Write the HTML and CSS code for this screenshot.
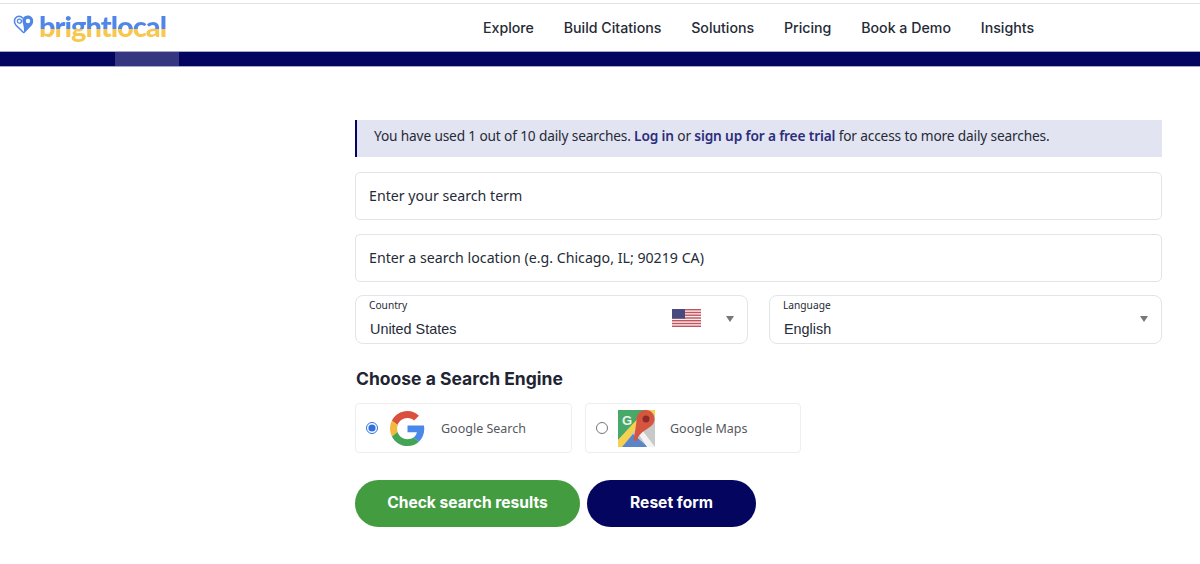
FILE: index.html
```html
<!DOCTYPE html>
<html lang="en">
<head>
<meta charset="utf-8">
<title>BrightLocal search</title>
<link rel="stylesheet" href="styles.css">
</head>
<body>
<header class="site-header">
  <a class="logo" href="#">
    <svg class="logo-mark" width="22" height="22" viewBox="0 0 22 22" fill="none">
      <path d="M11 20 L3 12.2 C0.6 9.6 1 5.5 3.8 3.9 C6.2 2.6 8.4 3.6 10 5.2" stroke="#4f86e8" stroke-width="1.6" stroke-linejoin="round"/>
      <path d="M11 20.5 L18.6 12.6 C21.6 9.2 20.4 3.4 15.6 2.6 C11.6 2 8.6 5.4 9.6 9.2 C10.1 11 11.4 15 11 20.5Z" fill="#4f86e8"/>
      <circle cx="15" cy="8" r="2.2" fill="#fff"/>
      <circle cx="6.4" cy="8.2" r="2" stroke="#4f86e8" stroke-width="1.3"/>
    </svg>
    <span class="logo-text">brightlocal</span>
  </a>
  <nav class="nav">
    <a href="#">Explore</a>
    <a href="#">Build Citations</a>
    <a href="#">Solutions</a>
    <a href="#">Pricing</a>
    <a href="#">Book a Demo</a>
    <a href="#">Insights</a>
  </nav>
</header>
<div class="band"><span class="band-tab"></span></div>
<main class="main">
  <p class="notice">You have used 1 out of 10 daily searches. <a href="#">Log in</a> or <a href="#">sign up for a free trial</a> for access to more daily searches.</p>
  <div class="field field-term">Enter your search term</div>
  <div class="field">Enter a search location (e.g. Chicago, IL; 90219 CA)</div>
  <div class="select-row">
    <div class="select">
      <span class="select-label">Country</span>
      <span class="select-value">United States</span>
      <svg class="flag" width="29" height="18" viewBox="0 0 29 18">
        <rect width="29" height="18" fill="#f4eeee"/>
        <g fill="#c5535c">
          <rect y="0" width="29" height="1.4"/>
          <rect y="2.8" width="29" height="1.4"/>
          <rect y="5.5" width="29" height="1.4"/>
          <rect y="8.3" width="29" height="1.4"/>
          <rect y="11" width="29" height="1.4"/>
          <rect y="13.8" width="29" height="1.4"/>
          <rect y="16.6" width="29" height="1.4"/>
        </g>
        <rect width="13" height="9.6" fill="#47497f"/>
      </svg>
      <span class="caret"></span>
    </div>
    <div class="select">
      <span class="select-label">Language</span>
      <span class="select-value">English</span>
      <span class="caret"></span>
    </div>
  </div>
  <h2 class="heading">Choose a Search Engine</h2>
  <div class="engines">
    <label class="engine engine-search">
      <input class="radio" type="radio" name="engine" checked>
      <svg class="engine-icon" width="35" height="35" viewBox="0 0 48 48">
        <path fill="#d9503f" d="M24 9.5c3.9 0 6.9 1.6 9 3.6l6.7-6.7C35.6 2.6 30.2 0 24 0 14.6 0 6.5 5.4 2.6 13.2l7.8 6.1C12.3 13.5 17.6 9.5 24 9.5z"/>
        <path fill="#4a88ea" d="M47 24.6c0-1.6-.2-3.2-.5-4.6H24v9.1h12.9c-.6 3-2.2 5.5-4.8 7.2l7.5 5.8C44 38 47 31.9 47 24.6z"/>
        <path fill="#f3b93f" d="M10.5 28.7c-.5-1.4-.7-3-.7-4.7s.3-3.2.7-4.7l-7.9-6.1C.9 16.5 0 20.1 0 24s.9 7.5 2.6 10.8l7.9-6.1z"/>
        <path fill="#43a356" d="M24 48c6.5 0 11.9-2.1 15.6-5.8l-7.5-5.8c-2.1 1.4-4.7 2.2-8.1 2.2-6.4 0-11.7-4-13.6-9.9l-7.8 6.1C6.5 42.6 14.6 48 24 48z"/>
      </svg>
      <span class="engine-name">Google Search</span>
    </label>
    <label class="engine engine-maps">
      <input class="radio" type="radio" name="engine">
      <svg class="engine-icon" width="37" height="37" viewBox="0 0 37 37">
        <rect width="37" height="37" rx="1" fill="#c9c9c9"/>
        <path d="M0 0H28L0 30Z" fill="#48a868"/>
        <path d="M31 0H37V6Z" fill="#f4d24f"/>
        <path d="M0 37V30L28 0H31L5 37Z" fill="#f4d24f"/>
        <path d="M4 37L15 24L30 37Z" fill="#5a85c9"/>
        <path d="M20 23L24 20L37 37H29Z" fill="#f3f3f3"/>
        <path d="M28 0C23 0 18.5 4 18.5 9.5C18.5 13 17 22 15.5 31L18.5 31C20.5 25 24 22 29 19C33 16.5 36.5 14 36.5 9C36.5 4 33 0 28 0Z" fill="#d6553f"/>
        <circle cx="28" cy="9" r="3.5" fill="#8e2a2a"/>
        <text class="maps-g" x="4" y="14.5">G</text>
      </svg>
      <span class="engine-name">Google Maps</span>
    </label>
  </div>
  <div class="actions">
    <button class="btn btn-green" type="button">Check search results</button>
    <button class="btn btn-navy" type="button">Reset form</button>
  </div>
</main>
</body>
</html>
```
FILE: styles.css
```css
* { box-sizing: border-box; }
html, body { margin: 0; padding: 0; }
body {
  width: 1200px;
  height: 564px;
  overflow: hidden;
  background: #fff;
  font-family: "Noto Sans", "Open Sans", sans-serif;
  color: #252b37;
}
a { text-decoration: none; color: inherit; }

.site-header {
  height: 51px;
  margin-top: 3px;
  margin-bottom: -3px;
  border-top: 1px solid #e3e3e3;
  display: flex;
  align-items: center;
  padding-left: 13px;
}
.logo {
  display: flex;
  align-items: center;
  gap: 4px;
  width: 470px;
  margin-top: -6px;
  flex: none;
}
.logo-mark { flex: none; margin-top: -4px; }
.logo-text {
  font-family: "Lato", sans-serif;
  font-weight: 900;
  font-size: 29px;
  line-height: 32px;
  letter-spacing: -1px;
  background: linear-gradient(to bottom, #4f86e8 0, #4f86e8 59%, #f9c74f 59%, #f9c74f 100%);
  -webkit-background-clip: text;
  background-clip: text;
  color: transparent;
}
.nav {
  display: flex;
  gap: 29.8px;
  font-family: "Inter", sans-serif;
  font-weight: 500;
  font-size: 14.2px;
  color: #252b37;
  margin-top: -4px;
}
.band {
  height: 16px;
  background: #03055e;
  border-top: 1px solid #a6a8c8;
  border-bottom: 1px solid #a6a8c8;
  padding-left: 115px;
}
.band-tab {
  display: block;
  width: 64px;
  height: 100%;
  background: #35367f;
}
.main {
  width: 807px;
  margin-left: 355px;
  padding-top: 53px;
}
.notice {
  margin: 0 0 15px;
  height: 37px;
  background: #e3e4f1;
  border-left: 2px solid #03055e;
  padding-left: 17px;
  font-size: 13.7px;
  letter-spacing: -0.15px;
  line-height: 32px;
}
.notice a { color: #2b2d7c; font-weight: 600; }
.field {
  height: 48px;
  border: 1px solid #e3e4e8;
  border-radius: 5px;
  padding-left: 13px;
  margin-bottom: 13px;
  font-size: 14.2px;
  line-height: 46px;
}
.field-term { margin-bottom: 14px; }
.select-row {
  display: flex;
  gap: 21px;
}
.select {
  flex: 1;
  height: 49px;
  border: 1px solid #e3e4e8;
  border-radius: 8px;
  position: relative;
  padding-left: 13px;
  display: flex;
  flex-direction: column;
}
.select-label {
  font-size: 10.2px;
  line-height: 14px;
  margin-top: 2px;
}
.select-value {
  font-family: "Liberation Sans", sans-serif;
  font-size: 14.4px;
  line-height: 17px;
  margin-top: 9px;
  margin-left: 1px;
}
.flag {
  position: absolute;
  left: 316px;
  top: 13px;
}
.caret {
  position: absolute;
  right: 13px;
  top: 20px;
  width: 0;
  height: 0;
  border-left: 4.5px solid transparent;
  border-right: 4.5px solid transparent;
  border-top: 6px solid #77787c;
}
.heading {
  font-family: "Inter", sans-serif;
  font-weight: 700;
  font-size: 17.5px;
  line-height: 24px;
  margin: 23px 0 12px 1px;
  color: #1f2533;
}
.engines {
  display: flex;
  gap: 13px;
}
.engine {
  height: 50px;
  border: 1px solid #eeeef1;
  border-radius: 4px;
  display: flex;
  align-items: center;
  font-size: 12.5px;
  color: #55585e;
}
.engine-search { width: 217px; }
.engine-maps { width: 216px; }
.radio {
  width: 12px;
  height: 12px;
  margin: 0 0 0 10px;
  flex: none;
  accent-color: #2f6fe0;
}
.engine-icon { flex: none; }
.engine-search .engine-icon { margin-left: 12px; }
.engine-search .engine-name { margin-left: 16px; }
.engine-maps .engine-icon { margin-left: 10px; }
.engine-maps .engine-name { margin-left: 15px; }
.maps-g {
  font-family: "Liberation Sans", sans-serif;
  font-weight: 700;
  font-size: 13px;
  fill: #e8f3ec;
}
.actions {
  display: flex;
  gap: 7px;
  margin-top: 27px;
}
.btn {
  height: 47px;
  border: 0;
  border-radius: 24px;
  color: #fff;
  font-family: "Inter", sans-serif;
  font-weight: 700;
  font-size: 15.6px;
  padding: 0 0 2px;
}
.btn-green { width: 225px; background: #439c40; }
.btn-navy { width: 169px; background: #03055e; }
```
